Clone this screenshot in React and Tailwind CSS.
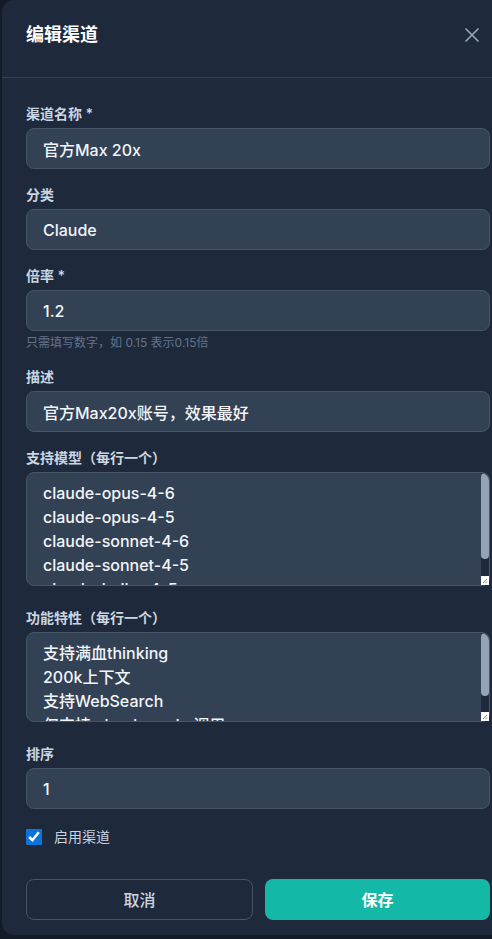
import React from 'react';
import { X } from 'lucide-react';

const fontStack = "font-['Inter','Noto_Sans_CJK_SC',sans-serif]";

const inputClass =
  'block w-full h-[41px] rounded-lg border border-[#475569] bg-[#334155] px-4 text-base font-medium text-[#f1f5f9] outline-none';

const textareaClass =
  'block w-full resize-none overflow-hidden rounded-lg border border-[#475569] bg-[#334155] py-2 pl-4 pr-6 text-base leading-6 font-medium text-[#f1f5f9] outline-none';

// Small field wrapper: label on top, control below
const Field = ({ label, children, hint, className = '' }) => (
  <div className={className}>
    <label className="mb-1 block text-sm leading-5 font-semibold text-[#cbd5e1]">{label}</label>
    {children}
    {hint && <p className="mt-1 mb-0.5 text-xs leading-4 text-[#64748b]">{hint}</p>}
  </div>
);

// Textarea with the light scrollbar thumb and resize corner drawn over its right edge
const ScrollTextarea = ({ height, value, thumb }) => (
  <div className="relative">
    <textarea className={`${textareaClass} ${height}`} defaultValue={value} />
    <div className="absolute top-px right-px bottom-px flex w-2 flex-col overflow-hidden rounded-tr-lg">
      <div className="flex-1 bg-[#1e293b]">
        <div className="w-2 rounded-full bg-[#94a3b8]" style={{ height: thumb }} />
      </div>
      <div className="flex h-[9px] w-2 items-end justify-end bg-white">
        <svg width="6" height="6" viewBox="0 0 6 6" className="mb-px mr-px">
          <path d="M5 1L1 5M5 3.5L3.5 5" stroke="#6b7280" strokeWidth="0.9" />
        </svg>
      </div>
    </div>
  </div>
);

const models = [
  'claude-opus-4-6',
  'claude-opus-4-5',
  'claude-sonnet-4-6',
  'claude-sonnet-4-5',
  'claude-haiku-4-5',
].join('\n');

const features = ['支持满血thinking', '200k上下文', '支持WebSearch', '仅支持 claude code 调用'].join('\n');

export default function App() {
  return (
    <div className={`h-[939px] w-[492px] overflow-hidden bg-[#141b28] ${fontStack}`}>
      <div className="ml-[2px] w-[512px] rounded-xl bg-[#1e293b]">
        {/* Header */}
        <div className="flex items-center justify-between border-b border-[#334155] pl-6 pr-[30px] pt-[21px] pb-[28px]">
          <h2 className="text-lg leading-7 font-bold text-white">编辑渠道</h2>
          <X size={24} strokeWidth={1.75} className="text-[#94a3b8]" />
        </div>

        {/* Body */}
        <div className="space-y-4 px-6 pt-[26px] pb-[15px]">
          <Field label="渠道名称 *">
            <input className={inputClass} defaultValue="官方Max 20x" />
          </Field>
          <Field label="分类">
            <input className={inputClass} defaultValue="Claude" />
          </Field>
          <Field label="倍率 *" hint="只需填写数字，如 0.15 表示0.15倍">
            <input className={inputClass} defaultValue="1.2" />
          </Field>
          <Field label="描述">
            <input className={inputClass} defaultValue="官方Max20x账号，效果最好" />
          </Field>
          <Field label="支持模型（每行一个）" className="pb-1.5">
            <ScrollTextarea height="h-[114px]" value={models} thumb={86} />
          </Field>
          <Field label="功能特性（每行一个）" className="pb-1.5">
            <ScrollTextarea height="h-[90px]" value={features} thumb={63} />
          </Field>
          <Field label="排序">
            <input className={inputClass} defaultValue="1" />
          </Field>
          <label className="flex items-center gap-3 !mt-[18px]">
            <input type="checkbox" defaultChecked className="h-4 w-4 accent-[#0a74da]" />
            <span className="text-sm leading-5 text-[#cbd5e1]">启用渠道</span>
          </label>

          {/* Footer actions */}
          <div className="flex gap-3 !mt-[32px]">
            <button
              type="button"
              className="h-[41px] flex-1 rounded-lg border border-[#475569] text-base font-medium text-[#cbd5e1]"
            >
              取消
            </button>
            <button
              type="button"
              className="h-[41px] flex-1 rounded-lg bg-[#14b8a6] text-base font-semibold text-white"
            >
              保存
            </button>
          </div>
        </div>
      </div>
    </div>
  );
}
